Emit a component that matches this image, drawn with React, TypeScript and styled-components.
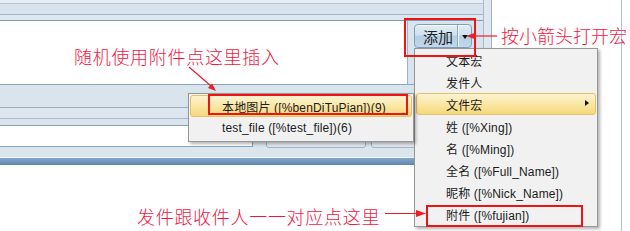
import React from 'react';
import styled, { createGlobalStyle } from 'styled-components';

const GlobalStyle = createGlobalStyle`
  html, body {
    margin: 0;
    padding: 0;
    background: #ffffff;
  }
  body {
    font-family: "Liberation Sans", "Noto Sans CJK SC", sans-serif;
  }
  #root {
    width: 630px;
    height: 231px;
    overflow: hidden;
  }
`;

const Page = styled.div`
  position: relative;
  display: flex;
  width: 630px;
  height: 231px;
  overflow: hidden;
  background: #ffffff;
`;

/* ---------- the app window behind the menus ---------- */

const AppWindow = styled.div`
  display: flex;
  align-self: flex-start;
  width: 492px;
  height: 165px;
`;

const MainColumn = styled.div`
  flex: 1;
  min-width: 0;
  display: flex;
  flex-direction: column;
`;

const EdgeColumn = styled.div`
  box-sizing: border-box;
  width: 9px;
  background: #dfe8f0;
  border-left: 1px solid #a6bacb;
  border-right: 1px solid #9db2c4;
`;

const Band = styled.div<{ $h: number; $bg: string; $line?: string }>`
  flex: none;
  height: ${({ $h }) => $h}px;
  background: ${({ $bg }) => $bg};
  border-bottom: ${({ $line }) => ($line ? `1px solid ${$line}` : 'none')};
`;

const EditorRow = styled.div`
  flex: none;
  display: flex;
  height: 63px;
  border-bottom: 1px solid #8ea6ba;
`;

const Editor = styled.div`
  box-sizing: border-box;
  width: 408px;
  background: #ffffff;
  border-right: 1px solid #9cb1c3;
`;

const SidePanel = styled.div`
  flex: 1;
  padding: 3px 0 0 6px;
  background: #d9e4ee;
`;

const SplitButton = styled.div`
  box-sizing: border-box;
  display: flex;
  width: 58px;
  height: 24px;
  border: 1px solid #7f9fbd;
  border-radius: 4px;
  background: linear-gradient(#e3edf6 0%, #cfe0ef 45%, #b4cee5 52%, #c2d8ec 100%);
  box-shadow: inset 0 1px 0 rgba(255, 255, 255, 0.75);
  font-family: "Noto Sans CJK SC", sans-serif;
  font-size: 15px;
  color: #1e1e1e;
`;

const ButtonLabel = styled.div`
  display: flex;
  align-items: center;
  width: 42px;
  padding-left: 8px;
  box-sizing: border-box;
  line-height: 1;
`;

const ButtonDrop = styled.div`
  flex: 1;
  display: flex;
  align-items: center;
  justify-content: center;
  border-left: 1px solid #8eabc6;
  box-shadow: inset 1px 0 0 rgba(255, 255, 255, 0.8);
`;

const DownTriangle = styled.span`
  width: 0;
  height: 0;
  border-left: 3.5px solid transparent;
  border-right: 3.5px solid transparent;
  border-top: 4px solid #111;
  margin-top: 1px;
`;

const InputRow = styled.div`
  flex: none;
  display: flex;
  align-items: flex-start;
  height: 29px;
  background: #dae4ed;
`;

const TextInput = styled.div`
  box-sizing: border-box;
  width: 253px;
  height: 22px;
  margin-top: 6px;
  background: #ffffff;
  border: 1px solid #8da5b9;
  border-left: none;
`;

const RowButton = styled.div<{ $w: number; $gap: number }>`
  box-sizing: border-box;
  width: ${({ $w }) => $w}px;
  height: 25px;
  margin: 4px 0 0 ${({ $gap }) => $gap}px;
  border: 1px solid #a3b3c3;
  border-radius: 3px;
  background: linear-gradient(#f5f7f9, #e2e8ee);
`;

const StatusBar = styled.div`
  flex: none;
  height: 7px;
  background: linear-gradient(#83a7c8, #5f88b0);
`;

const Blank = styled.div`
  box-sizing: border-box;
  width: 130px;
  border-right: 1px solid #b3c1cf;
`;

/* ---------- menus lying over the window ---------- */

const Menu = styled.div<{ $x: number; $y: number; $w: number; $padY: number }>`
  position: absolute;
  left: ${({ $x }) => $x}px;
  top: ${({ $y }) => $y}px;
  width: ${({ $w }) => $w}px;
  box-sizing: border-box;
  padding: ${({ $padY }) => `${$padY}px 0 ${$padY + 1}px`};
  background: #f1f1f1;
  border: 1px solid #979797;
  box-shadow: 2px 2px 3px rgba(0, 0, 0, 0.3);
  font-family: "Liberation Sans", "Noto Sans CJK SC", sans-serif;
  font-size: 12px;
  letter-spacing: 0.15px;
  color: #1b1b1b;
`;

const MenuItem = styled.div<{ $indent: number; $active?: boolean }>`
  position: relative;
  display: flex;
  align-items: center;
  height: 22px;
  box-sizing: border-box;
  margin: 0 1px;
  padding-left: ${({ $indent }) => $indent}px;
  border: 1px solid ${({ $active }) => ($active ? '#e4c368' : 'transparent')};
  border-radius: 3px;
  background: ${({ $active }) =>
    $active ? 'linear-gradient(#fcf3d2 0%, #fbe8a9 45%, #f5d87c 100%)' : 'transparent'};
  white-space: nowrap;
`;

const SubArrow = styled.span`
  position: absolute;
  right: 6px;
  top: 6px;
  width: 0;
  height: 0;
  border-top: 3.5px solid transparent;
  border-bottom: 3.5px solid transparent;
  border-left: 4px solid #111;
`;

/* ---------- annotations ---------- */

const RedBox = styled.div<{ $x: number; $y: number; $w: number; $h: number }>`
  position: absolute;
  left: ${({ $x }) => $x}px;
  top: ${({ $y }) => $y}px;
  width: ${({ $w }) => $w}px;
  height: ${({ $h }) => $h}px;
  box-sizing: border-box;
  border: 2px solid #ee1414;
  pointer-events: none;
`;

const Callout = styled.div<{ $x: number; $y: number; $spacing: number }>`
  position: absolute;
  left: ${({ $x }) => $x}px;
  top: ${({ $y }) => $y}px;
  font-family: "Noto Sans CJK SC", sans-serif;
  font-weight: 300;
  font-size: 18px;
  line-height: 18px;
  letter-spacing: ${({ $spacing }) => $spacing}px;
  color: #f2163f;
  white-space: nowrap;
`;

const ArrowLayer = styled.svg`
  position: absolute;
  left: 0;
  top: 0;
  pointer-events: none;
`;

const mainItems = [
  '文本宏',
  '发件人',
  '文件宏',
  '姓 ([%Xing])',
  '名 ([%Ming])',
  '全名 ([%Full_Name])',
  '昵称 ([%Nick_Name])',
  '附件 ([%fujian])',
];

const subItems = ['本地图片 ([%benDiTuPian])(9)', 'test_file ([%test_file])(6)'];

export default function App() {
  return (
    <>
      <GlobalStyle />
      <Page>
        <AppWindow>
          <MainColumn>
            <Band $h={3} $bg="#e7edf3" $line="#b6c5d2" />
            <Band $h={10} $bg="#d8e3ed" $line="#a0b4c6" />
            <Band $h={5} $bg="#dee7f0" $line="#7c9dba" />
            <EditorRow>
              <Editor />
              <SidePanel>
                <SplitButton>
                  <ButtonLabel>添加</ButtonLabel>
                  <ButtonDrop>
                    <DownTriangle />
                  </ButtonDrop>
                </SplitButton>
              </SidePanel>
            </EditorRow>
            <Band $h={22} $bg="#dae4ed" $line="#98adc0" />
            <Band $h={10} $bg="#dde6ef" $line="#a8bacb" />
            <InputRow>
              <TextInput />
              <RowButton $w={100} $gap={13} />
              <RowButton $w={50} $gap={5} />
            </InputRow>
            <Band $h={9} $bg="#dbe5ee" $line="#eef3f8" />
            <StatusBar />
          </MainColumn>
          <EdgeColumn />
        </AppWindow>
        <Blank />

        <Menu $x={414} $y={48} $w={184} $padY={0}>
          {mainItems.map((label, i) => (
            <MenuItem key={label} $indent={29} $active={i === 2}>
              {label}
              {i === 2 && <SubArrow />}
            </MenuItem>
          ))}
        </Menu>

        <Menu $x={188} $y={93} $w={226} $padY={1}>
          {subItems.map((label, i) => (
            <MenuItem key={label} $indent={31} $active={i === 0}>
              {label}
            </MenuItem>
          ))}
        </Menu>

        <RedBox $x={404} $y={18} $w={72} $h={39} />
        <RedBox $x={208} $y={94} $w={200} $h={21} />
        <RedBox $x={426} $y={205} $w={157} $h={22} />

        <Callout $x={74} $y={47} $spacing={0.7}>随机使用附件点这里插入</Callout>
        <Callout $x={501} $y={26} $spacing={0}>按小箭头打开宏</Callout>
        <Callout $x={137} $y={207} $spacing={0.7}>发件跟收件人一一对应点这里</Callout>

        <ArrowLayer width={630} height={231} viewBox="0 0 630 231">
          <g stroke="#ee1c25" strokeWidth={1.2} fill="none">
            <line x1={189} y1={67} x2={211} y2={86} />
            <line x1={474} y1={36} x2={497} y2={36} />
            <line x1={385} y1={213.5} x2={418} y2={213.5} />
          </g>
          <g fill="#ee1c25">
            <polygon points="216,91 208,87.9 212,83.5" />
            <polygon points="466,36 476,32.5 476,39.5" />
            <polygon points="426,213.5 416,210 416,217" />
          </g>
        </ArrowLayer>
      </Page>
    </>
  );
}
